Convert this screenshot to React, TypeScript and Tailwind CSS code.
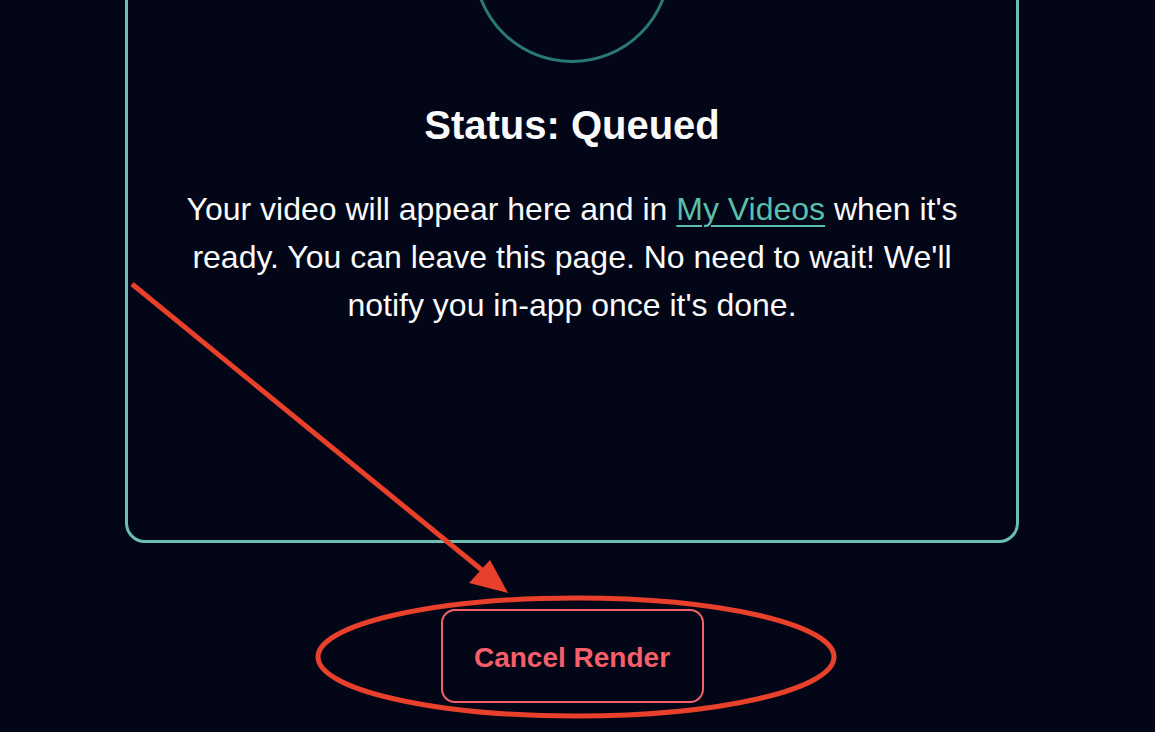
import React from "react";

export default function App() {
  return (
    <div
      className="relative w-[1155px] h-[732px] overflow-hidden bg-[#020617]"
      style={{ fontFamily: '"Liberation Sans", Arial, sans-serif' }}
    >
      <div className="flex flex-col items-center w-[894px] ml-[125px] -mt-[170px]">
        <div className="w-[894px] h-[713px] rounded-[20px] border-[3px] border-[#6cbfae] flex flex-col items-center pt-[32px]">
          <div className="w-[198px] h-[198px] rounded-full border-[3px] border-[#2b7875]" />
          <h1 className="mt-[40px] text-[40px] leading-[44px] font-bold text-[#fafafa]">Status: Queued</h1>
          <p className="mt-[38px] w-[860px] text-center text-[32px] leading-[48px] text-[#fafafa]">
            Your video will appear here and in{" "}
            <a className="text-[#5bbfa9] underline underline-offset-[5px] decoration-2">My Videos</a> when it's
            <br />
            ready. You can leave this page. No need to wait! We'll
            <br />
            notify you in-app once it's done.
          </p>
        </div>
        <button className="mt-[66px] w-[263px] h-[94px] pt-[3px] rounded-[14px] border-2 border-[#f4626b] text-[#f65f69] text-[28px] font-bold">
          Cancel Render
        </button>
      </div>
      <svg className="absolute inset-0 pointer-events-none" width="1155" height="732">
        <ellipse cx="576" cy="657" rx="258" ry="59" fill="none" stroke="#e8402a" strokeWidth="5" />
        <line x1="132" y1="284" x2="488" y2="575" stroke="#e8402a" strokeWidth="5" />
        <polygon points="508,593 469,583 490,560" fill="#e8402a" />
      </svg>
    </div>
  );
}
